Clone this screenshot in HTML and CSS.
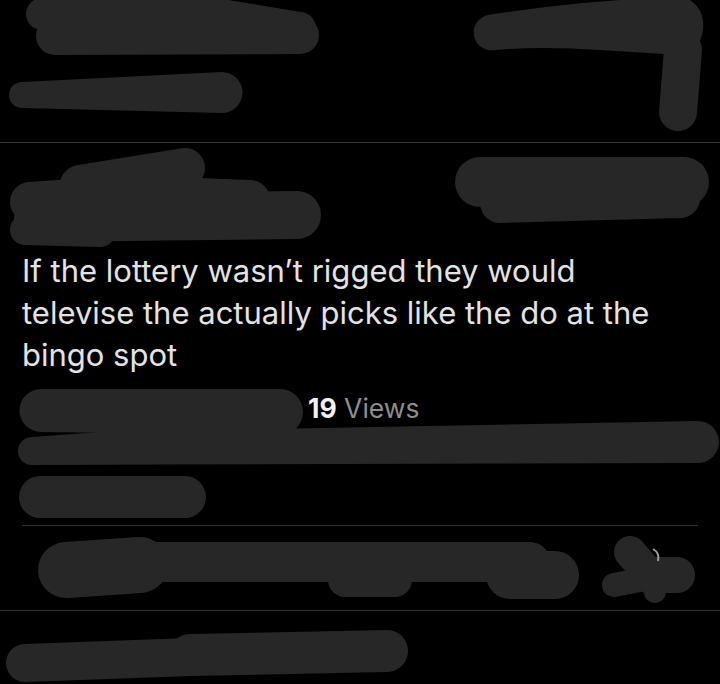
FILE: index.html
```html
<!DOCTYPE html>
<html lang="en">
<head>
  <meta charset="UTF-8">
  <meta name="viewport" content="width=device-width, initial-scale=1.0">
  <title>Post</title>
  <link rel="stylesheet" href="styles.css">
</head>
<body>
  <div class="prev"></div>

  <div class="tweet">
    <div class="author"></div>
    <p class="text">If the lottery wasn’t rigged they would televise the actually picks like the do at the bingo spot</p>
    <div class="meta"><span class="stamp"></span><b>19</b> Views</div>
    <div class="stats"></div>
  </div>

  <div class="actions"></div>
  <div class="reply"></div>

  <!-- redaction marks drawn over the screenshot -->
  <svg class="marks" width="720" height="684" viewBox="0 0 720 684">
    <g fill="none" stroke="#272727" stroke-linecap="round" stroke-linejoin="round">
      <!-- previous post -->
      <path d="M42,14 L215,10" stroke-width="32"/>
      <path d="M215,14 L300,28" stroke-width="32"/>
      <path d="M55,36 L300,35" stroke-width="38"/>
      <path d="M683,50 L678,112" stroke-width="38"/>
      <!-- author row -->
      <path d="M80,185 L185,168" stroke-width="40"/>
      <path d="M30,202 L120,196" stroke-width="40"/>
      <path d="M120,195 L250,200" stroke-width="40"/>
      <path d="M38,218 L297,215" stroke-width="48"/>
      <path d="M25,230 L100,232" stroke-width="30"/>
      <path d="M480,182 L684,182" stroke-width="50"/>
      <path d="M500,203 L680,198" stroke-width="40"/>
      <!-- stats -->
      <path d="M40,497 L185,497" stroke-width="42"/>
      <!-- actions -->
      <path d="M66,570 L140,565" stroke-width="56"/>
      <path d="M150,562 L530,562" stroke-width="40"/>
      <path d="M345,580 L395,580" stroke-width="34"/>
      <path d="M510,575 L555,575" stroke-width="48"/>
      <path d="M650,575 L630,552" stroke-width="32"/>
      <path d="M650,575 L677,575" stroke-width="36"/>
      <path d="M650,578 L614,585" stroke-width="24"/>
      <path d="M650,578 L655,592" stroke-width="22"/>
      <!-- reply box -->
      <path d="M25,663 L190,657" stroke-width="38"/>
      <path d="M190,655 L387,651" stroke-width="42"/>
    </g>
    <g fill="#272727">
      <path d="M488,15 Q560,4 620,0 L690,0 Q705,10 703,30 Q700,52 680,55 L600,50 Q540,46 495,50 A17,17 0 0 1 488,15 Z"/>
      <path d="M22,82 L222,72 A20.5,20.5 0 0 1 222,113 L22,108 A13,13 0 0 1 22,82 Z"/>
      <path d="M41,389 L280,389 A23,23 0 0 1 280,435 L41,432 A21.5,21.5 0 0 1 41,389 Z"/>
      <path d="M32,437 L100,432 L698,421 A21,21 0 0 1 698,463 L32,465 A14,14 0 0 1 32,437 Z"/>
    </g>
    <path d="M653,549 Q660,553 658,561" fill="none" stroke="#9a9a9a" stroke-width="2"/>
  </svg>
</body>
</html>
```

FILE: styles.css
```css
body { margin: 0; width: 720px; height: 684px; overflow: hidden; position: relative; background: #000; color: #e3e3e3; font-family: Inter, Roboto, "Liberation Sans", sans-serif; }
.prev { height: 142px; border-bottom: 1px solid #3a3a3a; }
.tweet { padding: 0 30px 0 22px; }
.author { height: 107px; }
.text { margin: 0; font-size: 31px; line-height: 42px; }
.meta { margin-top: 11px; font-size: 26.5px; line-height: 42px; color: #8e8e8e; }
.meta b { color: #f2f2f2; font-weight: 700; }
.stamp { display: inline-block; width: 286px; }
.stats { height: 96px; margin-right: -8px; border-bottom: 1px solid #2e2e2e; }
.actions { height: 84px; border-bottom: 1px solid #2e2e2e; }
.marks { position: absolute; top: 0; left: 0; pointer-events: none; }
```
